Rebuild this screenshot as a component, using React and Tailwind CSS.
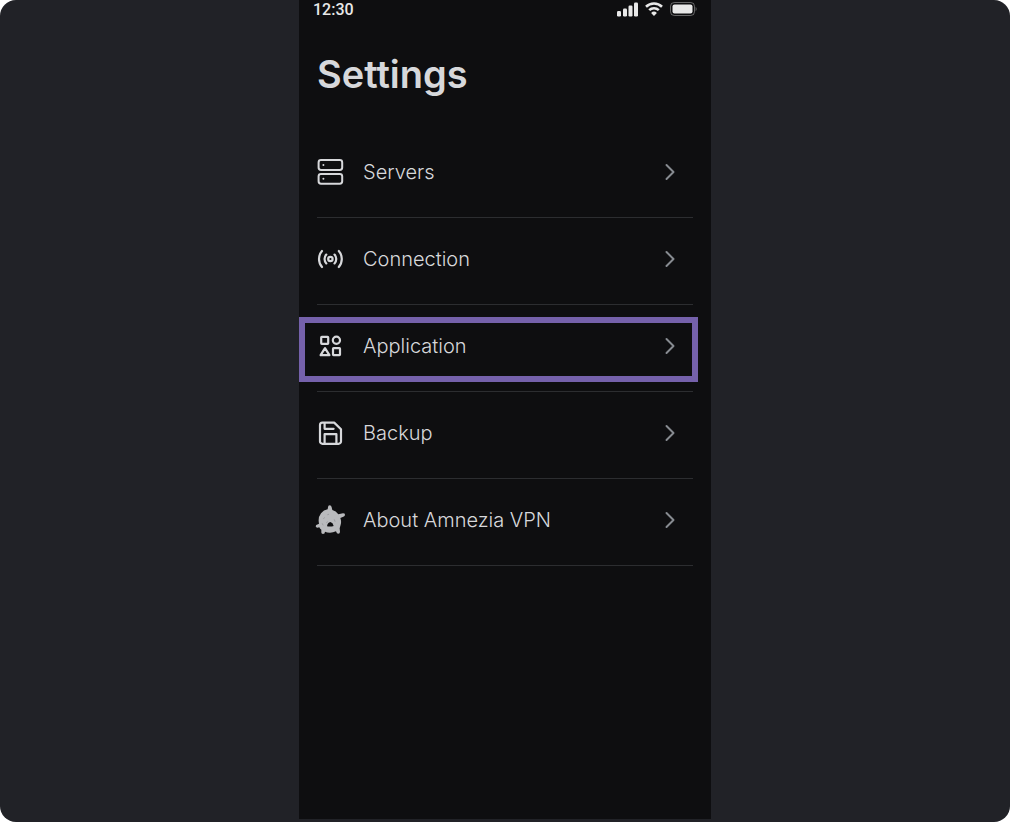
import { ChevronRight } from 'lucide-react';

const stroke = {
    fill: 'none',
    stroke: 'currentColor',
    strokeLinecap: 'round',
    strokeLinejoin: 'round',
};

function ServersIcon() {
    return (
        <svg className="size-7" viewBox="0 0 28 28" strokeWidth="2" aria-hidden="true" {...stroke}>
            <rect x="2.6" y="2.1" width="23.6" height="9.8" rx="2.4" />
            <rect x="2.6" y="15.9" width="23.6" height="9.8" rx="2.4" />
            <path d="M7.4 7h.01M7.4 20.800h.01" />
        </svg>
    );
}

function ConnectionIcon() {
    return (
        <svg className="size-7" viewBox="0 0 28 28" strokeWidth="2.200" aria-hidden="true" {...stroke}>
            <circle cx="14.400" cy="14" r="2.200" />
            <path d="M10.300 9.600a6.400 6.400 0 0 0 0 8.800M18.500 9.600a6.400 6.400 0 0 1 0 8.800" />
            <path d="M6 6a12.200 12.200 0 0 0 0 16M22.800 6a12.200 12.200 0 0 1 0 16" />
        </svg>
    );
}

function ApplicationIcon() {
    return (
        <svg className="size-7" viewBox="0 0 28 28" strokeWidth="2.200" aria-hidden="true" {...stroke}>
            <rect x="5.200" y="4.800" width="7" height="7" rx=".6" />
            <circle cx="20.400" cy="8.300" r="3.600" />
            <path d="M9 16.200 4.600 23.200h8.800z" />
            <rect x="17" y="16.200" width="7" height="7" rx=".6" />
        </svg>
    );
}

function BackupIcon() {
    return (
        <svg className="size-7" viewBox="0 0 28 28" strokeWidth="2.200" aria-hidden="true" {...stroke}>
            <path d="M6.400 3.600h11.800l6.800 6.600v12.200a2.400 2.400 0 0 1-2.400 2.400H6.400A2.400 2.400 0 0 1 4 22.400V6a2.400 2.400 0 0 1 2.400-2.400z" />
            <path d="M8.600 4v5.800h9M8.600 24.400v-9.200h11.800v9.200" />
        </svg>
    );
}

function AmneziaIcon() {
    return (
        <svg className="size-8 text-[#b9babd]" viewBox="27 28 96 96" aria-hidden="true">
            <path
                fill="currentColor"
                d="M69 38q0-6 5-6t6 6l2 8q11 2 18 13l14-3q6 0 6 4t-5 6l-9 4q4 10 1 20l-3 11 1 10q0 6-5 6t-6-5l-1-2q-9 4-18 4t-15-3q0 7-6 7t-5-7v-6q-5-3-6-7-10 3-11-3 0-4 7-6l3-2q-4-18 6-31 8-10 20-12z"
            />
            <path fill="#0e0e10" d="M66 95q2-12 10-13 8 2 10 12-9 3-20 1z" />
            <path
                stroke="#8f9094"
                strokeWidth="2"
                strokeLinecap="round"
                fill="none"
                d="M68 60l3-1M56 72l2-3M88 75l2 5M52 87l2 4M65 84l2-3"
            />
        </svg>
    );
}

function StatusBar() {
    return (
        <div className="flex h-5 items-center justify-between pr-3.5 pl-3.5">
            <time className="font-['Roboto',sans-serif] text-base leading-5 font-medium text-[#e8e8e8]">12:30</time>
            <div className="flex h-[18px] items-center gap-1.5 self-start text-[#e8e8e8]">
                <svg className="h-4 w-6" viewBox="0 0 24 16" fill="currentColor" aria-hidden="true">
                    <rect x="2" y="10" width="4" height="5.500" rx="1.200" />
                    <rect x="8" y="7.500" width="4" height="8" rx="1.200" />
                    <rect x="13.500" y="4.500" width="4" height="11" rx="1.200" />
                    <rect x="19" y="1.500" width="4" height="14" rx="1.200" />
                </svg>
                <svg className="h-4 w-[18px]" viewBox="0 0 18 16" fill="none" stroke="currentColor" aria-hidden="true">
                    <path strokeWidth="2.600" d="M1 5.700a11.600 11.600 0 0 1 16 0M4.200 9.100a7 7 0 0 1 9.600 0" />
                    <path fill="currentColor" stroke="none" d="M9 15l-2.900-3a4.200 4.200 0 0 1 5.800 0z" />
                </svg>
                <svg className="h-4 w-7" viewBox="0 0 28 16" fill="none" aria-hidden="true">
                    <rect x="1.500" y="1.500" width="24" height="13" rx="3.800" stroke="currentColor" opacity=".4" />
                    <rect x="3.500" y="3.500" width="20" height="9" rx="2" fill="currentColor" />
                    <path fill="currentColor" opacity=".4" d="M26.600 5.800c1.400.8 1.400 3.600 0 4.400z" />
                </svg>
            </div>
        </div>
    );
}

const ITEMS = [
    { label: 'Servers', href: '#servers', icon: ServersIcon },
    { label: 'Connection', href: '#connection', icon: ConnectionIcon },
    { label: 'Application', href: '#application', icon: ApplicationIcon, highlighted: true },
    { label: 'Backup', href: '#backup', icon: BackupIcon },
    { label: 'About Amnezia VPN', href: '#about', icon: AmneziaIcon },
];

function SettingsItem({ label, href, icon: Icon, highlighted }) {
    return (
        <li className="relative border-b border-[#2c2d30]">
            <a href={href} className="flex items-center gap-5 pt-[27px] pr-[9px] pb-[31px]">
                <span className="flex h-7 w-[26px] shrink-0 items-center justify-center text-[#d7d8db]">
                    <span className="shrink-0">
                        <Icon />
                    </span>
                </span>
                <span className="flex-1 text-xl leading-7 font-light">{label}</span>
                <ChevronRight className="size-7 text-[#878b91]" strokeWidth={1.7} aria-hidden="true" />
            </a>
            {highlighted && (
                <div className="pointer-events-none absolute top-3 -right-[5px] -left-[18px] h-[65px] border-6 border-[#7561ab]" />
            )}
        </li>
    );
}

export default function App() {
    return (
        <div className="flex min-h-screen justify-center rounded-2xl bg-[#212227] pb-[3px] font-['Inter',sans-serif] text-[#d7d8db]">
            <main className="w-full max-w-[412px] bg-[#0e0e10]">
                <StatusBar />
                <div className="px-[18px]">
                    <h1 className="pt-[30px] text-[38px] leading-12 font-semibold">Settings</h1>
                    <nav aria-label="Settings" className="pt-[33px]">
                        <ul>
                            {ITEMS.map((item) => (
                                <SettingsItem key={item.label} {...item} />
                            ))}
                        </ul>
                    </nav>
                </div>
            </main>
        </div>
    );
}
